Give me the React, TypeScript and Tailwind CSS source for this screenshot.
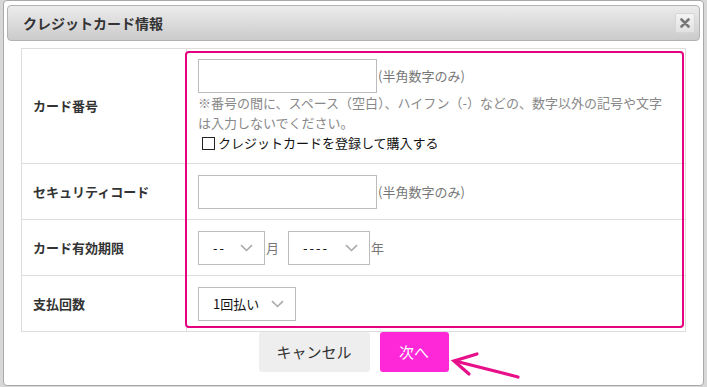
import React from "react";

const font = "font-['Meiryo','Noto_Sans_CJK_JP','Noto_Sans',sans-serif]";

function Chevron() {
  return (
    <svg width="13" height="8" viewBox="0 0 13 8" className="shrink-0">
      <path d="M1 1.2 L6.5 6.5 L12 1.2" fill="none" stroke="#aaaaaa" strokeWidth="1.6" />
    </svg>
  );
}

function FakeSelect({ value, width, dashes }: { value: string; width: string; dashes?: boolean }) {
  return (
    <div
      className={`${width} h-[34px] border border-[#bcbcbc] bg-white flex items-center justify-between pl-[14px] pr-[11px]`}
    >
      <span className={`text-[13px] text-[#111] ${dashes ? "tracking-[2px]" : ""}`}>{value}</span>
      <Chevron />
    </div>
  );
}

export default function App() {
  const rows = [
    { label: "セキュリティコード", kind: "security" },
    { label: "カード有効期限", kind: "expiry" },
    { label: "支払回数", kind: "pay" },
  ];

  return (
    <div className={`relative w-[707px] h-[387px] bg-[#d8d8d8] overflow-hidden ${font}`}>
      {/* dialog */}
      <div className="ml-[3px] w-[701px] h-[386px] bg-white border border-[#a9a9a9] rounded-[4px] px-[3px] pt-[4px]">
        {/* title bar */}
        <div className="h-[36px] rounded-[4px] border border-[#b3b3b3] bg-gradient-to-b from-[#ececec] to-[#cbcbcb] flex items-center justify-between pl-[15px] pr-[4px]">
          <span className="text-[14px] font-bold text-[#333]">クレジットカード情報</span>
          <div className="w-[20px] h-[20px] rounded-[2px] border border-[#d6d6d6] bg-gradient-to-b from-[#f4f4f4] to-[#e2e2e2] flex items-center justify-center">
            <svg width="10" height="10" viewBox="0 0 10 10">
              <path d="M1.5 1.5 L8.5 8.5 M8.5 1.5 L1.5 8.5" stroke="#777" strokeWidth="2.6" strokeLinecap="round" />
            </svg>
          </div>
        </div>

        {/* table */}
        <div className="relative mx-[14px] mt-[7px] border border-[#dddddd]">
          <div className="flex h-[115px] border-b border-[#dddddd]">
            <div className="w-[165px] shrink-0 border-r border-[#dddddd] flex items-center pl-[11px] text-[13px] font-bold text-[#333]">
              カード番号
            </div>
            <div className="pl-[11px] pt-[10px]">
              <div className="flex items-center">
                <div className="w-[179px] h-[34px] border border-[#bcbcbc] bg-white" />
                <span className="ml-[1px] text-[13px] text-[#777]">(半角数字のみ)</span>
              </div>
              <p className="text-[13px] leading-[20px] text-[#888] whitespace-nowrap">
                ※番号の間に、スペース（空白）、ハイフン（-）などの、数字以外の記号や文字
                <br />
                は入力しないでください。
              </p>
              <label className="flex items-center h-[20px] text-[13px] text-[#111]">
                <span className="ml-[4px] w-[13px] h-[13px] border border-[#222] bg-white" />
                <span className="ml-[3px]">クレジットカードを登録して購入する</span>
              </label>
            </div>
          </div>

          {rows.map((row, i) => (
            <div
              key={row.kind}
              className={`flex ${i < rows.length - 1 ? "h-[56px] border-b border-[#dddddd]" : "h-[55px]"}`}
            >
              <div className="w-[165px] shrink-0 border-r border-[#dddddd] flex items-center pl-[11px] text-[13px] font-bold text-[#333]">
                {row.label}
              </div>
              <div className="pl-[11px] flex items-center">
                {row.kind === "security" && (
                  <>
                    <div className="w-[179px] h-[34px] border border-[#bcbcbc] bg-white" />
                    <span className="ml-[1px] text-[13px] text-[#777]">(半角数字のみ)</span>
                  </>
                )}
                {row.kind === "expiry" && (
                  <>
                    <FakeSelect value="--" width="w-[67px]" dashes />
                    <span className="ml-[1px] text-[13px] text-[#777]">月</span>
                    <div className="ml-[9px]">
                      <FakeSelect value="----" width="w-[82px]" dashes />
                    </div>
                    <span className="ml-[1px] text-[13px] text-[#777]">年</span>
                  </>
                )}
                {row.kind === "pay" && <FakeSelect value="1回払い" width="w-[98px]" />}
              </div>
            </div>
          ))}

          {/* highlight annotation */}
          <div className="absolute left-[163px] top-[2px] w-[499px] h-[277px] border-2 border-[#e5007f] rounded-[4px] pointer-events-none" />
        </div>

        {/* buttons */}
        <div className="flex justify-center gap-[10px]">
          <button className="w-[111px] h-[40px] rounded-[3px] bg-[#eeeeee] text-[15px] text-[#333]">
            キャンセル
          </button>
          <button className="w-[69px] h-[40px] rounded-[3px] bg-[#ff28d9] text-[15px] text-white">
            次へ
          </button>
        </div>
      </div>

      {/* arrow annotation */}
      <svg className="absolute left-0 top-0 pointer-events-none" width="707" height="387">
        <g stroke="#e8108a" strokeWidth="3.2" strokeLinecap="round" fill="none">
          <path d="M518 377 L455 361" />
          <path d="M477 354 L454 361 L469 374" />
        </g>
      </svg>
    </div>
  );
}
